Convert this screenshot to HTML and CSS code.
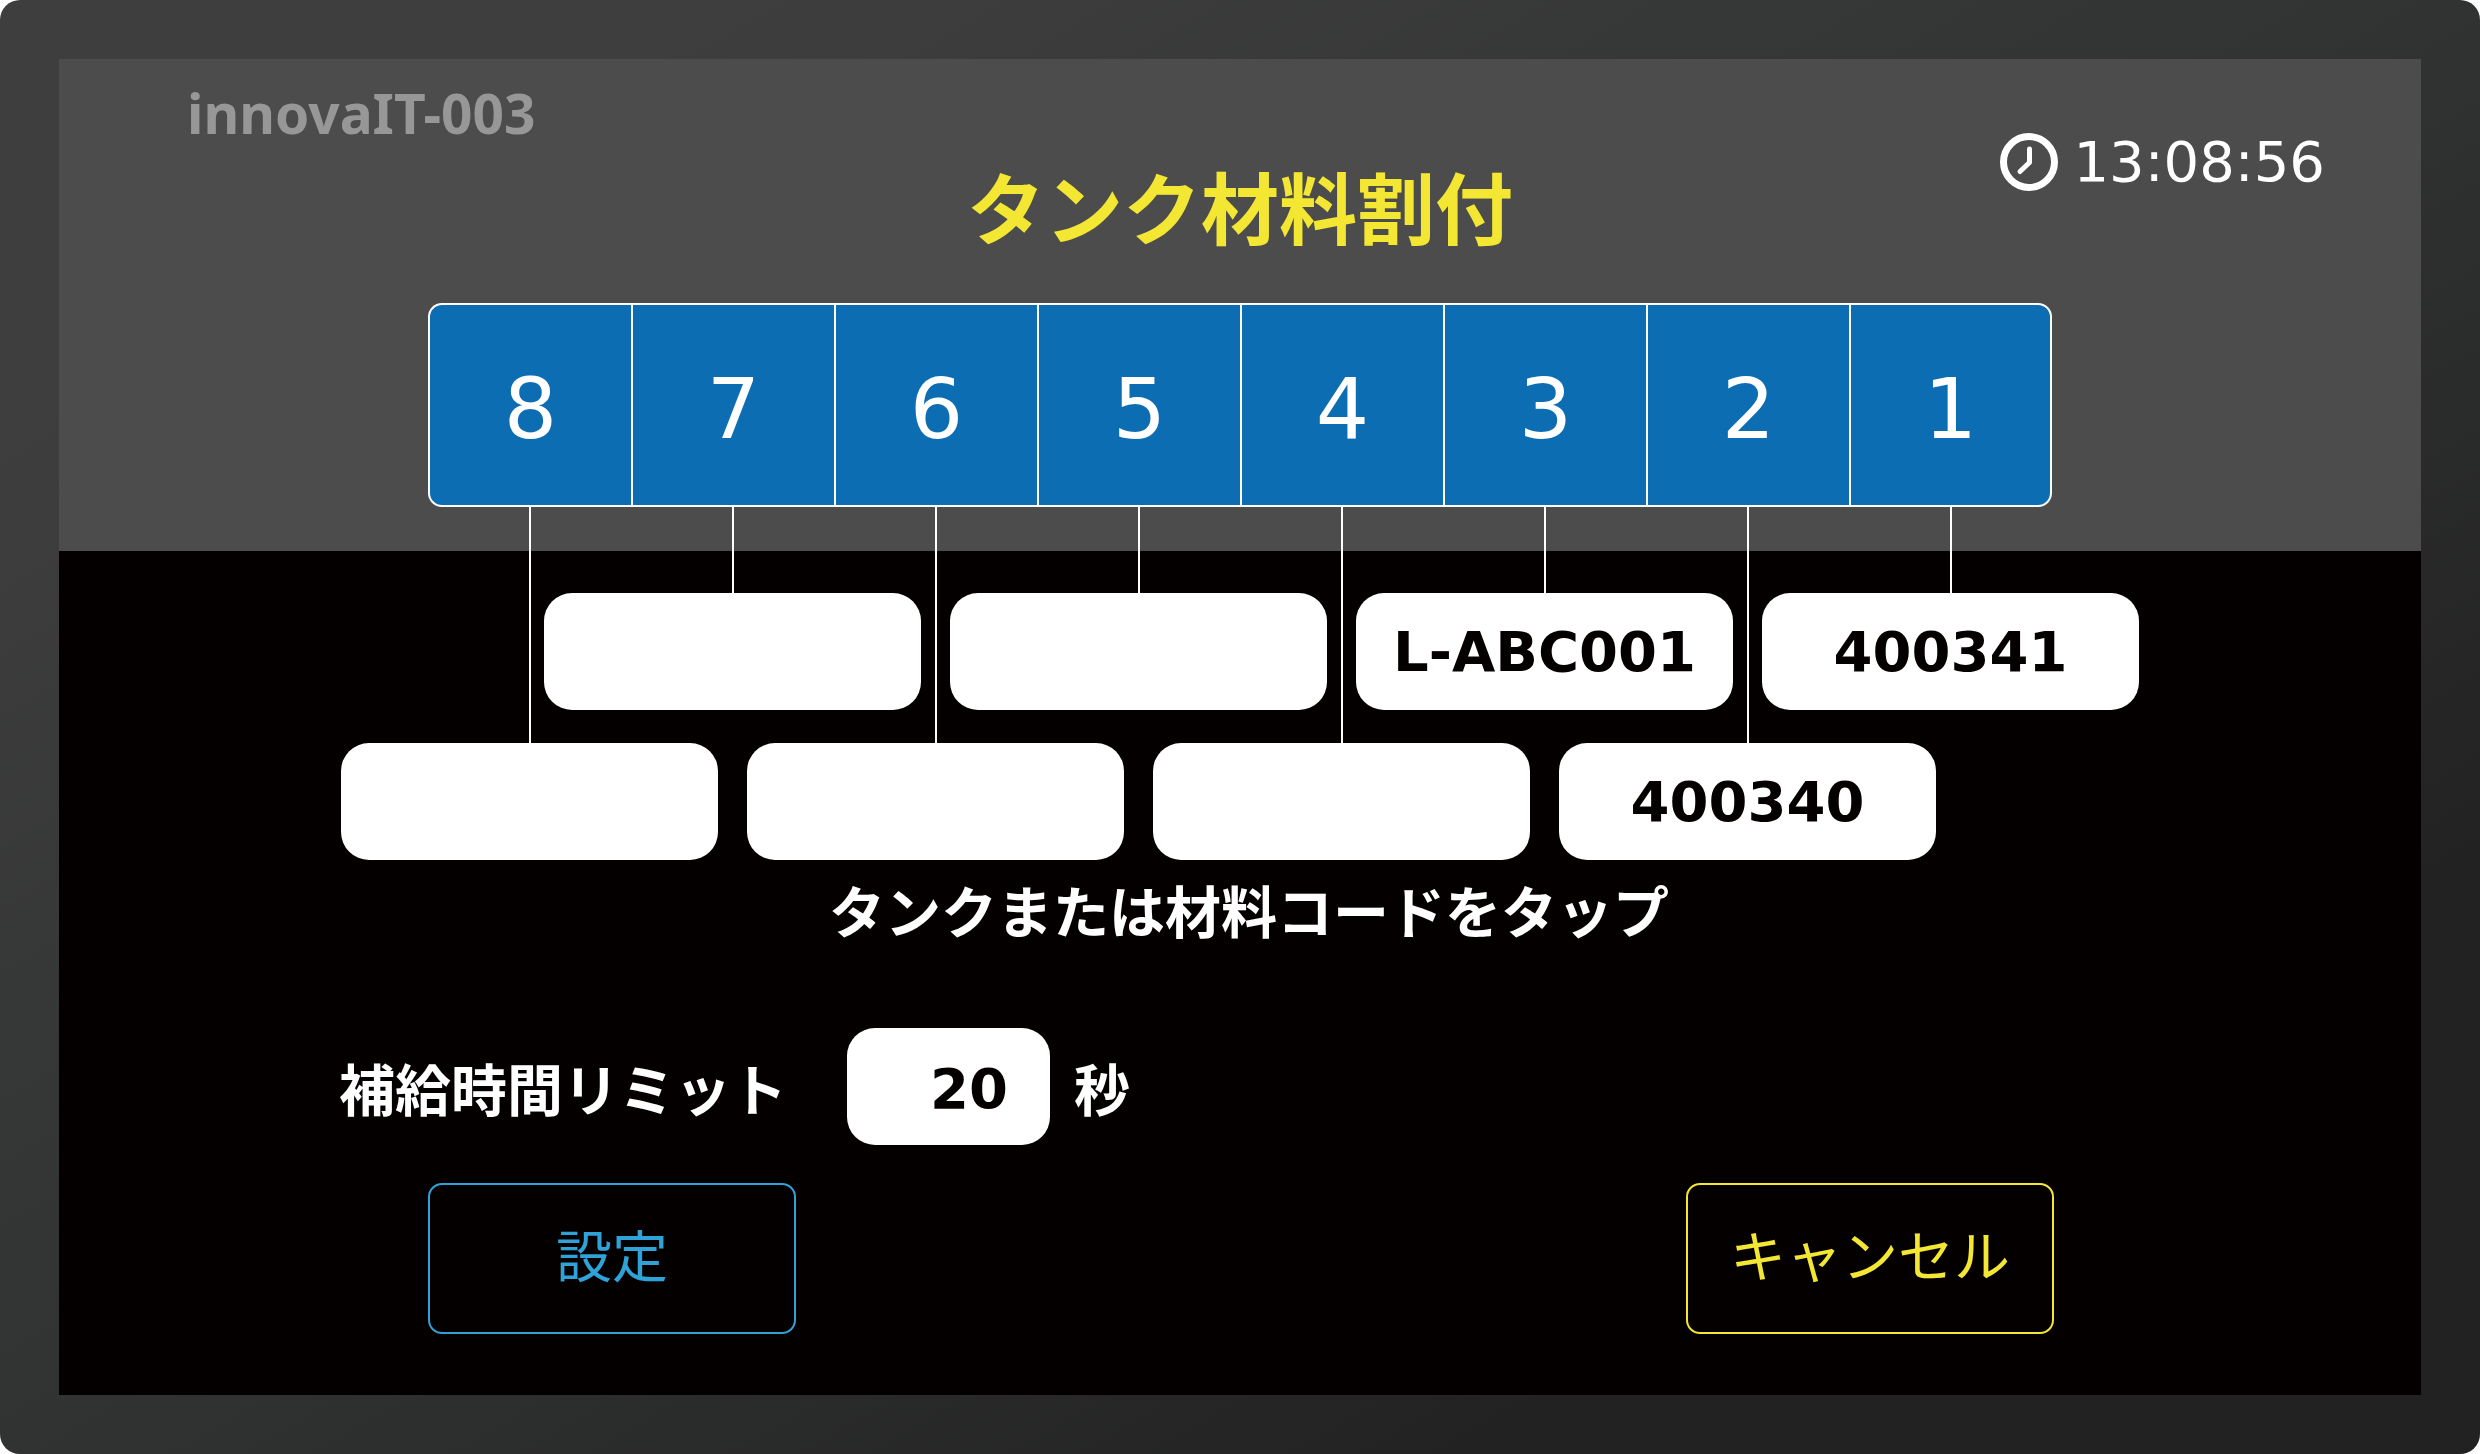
FILE: index.html
```html
<!DOCTYPE html>
<html lang="ja">
<head>
  <meta charset="UTF-8">
  <meta name="viewport" content="width=device-width, initial-scale=1.0">
  <title>タンク材料割付</title>
  <link rel="stylesheet" href="styles.css">
</head>
<body>
  <div class="bezel">
    <main class="screen">
      <header class="topbar">
        <div class="machine">innovaIT-003</div>
        <h1>タンク材料割付</h1>
        <div class="clock">
          <svg viewBox="0 0 58 58" fill="none" stroke="white" stroke-linecap="round" stroke-linejoin="round" aria-hidden="true">
            <circle cx="29" cy="29" r="25.5" stroke-width="7"/>
            <path d="M29.5 16v13.5L20 38.5" stroke-width="5"/>
          </svg>
          <time>13:08:56</time>
        </div>
      </header>

      <section class="tanks">
        <div class="tank low">
          <button type="button" class="number">8</button>
          <span class="line"></span>
          <button type="button" class="code" aria-label="タンク8の材料コード"></button>
        </div>
        <div class="tank">
          <button type="button" class="number">7</button>
          <span class="line"></span>
          <button type="button" class="code" aria-label="タンク7の材料コード"></button>
        </div>
        <div class="tank low">
          <button type="button" class="number">6</button>
          <span class="line"></span>
          <button type="button" class="code" aria-label="タンク6の材料コード"></button>
        </div>
        <div class="tank">
          <button type="button" class="number">5</button>
          <span class="line"></span>
          <button type="button" class="code" aria-label="タンク5の材料コード"></button>
        </div>
        <div class="tank low">
          <button type="button" class="number">4</button>
          <span class="line"></span>
          <button type="button" class="code" aria-label="タンク4の材料コード"></button>
        </div>
        <div class="tank">
          <button type="button" class="number">3</button>
          <span class="line"></span>
          <button type="button" class="code">L-ABC001</button>
        </div>
        <div class="tank low">
          <button type="button" class="number">2</button>
          <span class="line"></span>
          <button type="button" class="code">400340</button>
        </div>
        <div class="tank">
          <button type="button" class="number">1</button>
          <span class="line"></span>
          <button type="button" class="code">400341</button>
        </div>
      </section>

      <p class="hint">タンクまたは材料コードをタップ</p>

      <form class="settings">
        <div class="limit">
          <label for="limit">補給時間リミット</label>
          <input type="text" id="limit" inputmode="numeric" value="20">
          <span>秒</span>
        </div>
        <div class="actions">
          <button type="submit" class="ok">設定</button>
          <button type="button" class="cancel">キャンセル</button>
        </div>
      </form>
    </main>
  </div>
</body>
</html>
```
FILE: styles.css
```css
* {
  box-sizing: border-box;
}

body {
  margin: 0;
  background-color: white;
  color: white;
  font-family: "DejaVu Sans", "Noto Sans CJK JP", sans-serif;
  font-size: 56px;
}

button,
input {
  font: inherit;
  cursor: pointer;
}

.bezel {
  display: flex;
  min-height: 100vh;
  padding: 59px;
  border-radius: 20px;
  background: linear-gradient(to bottom right, #3e3e3e 15%, #313232 50%, #222222 80%);
}

/* grey band behind the title and tanks, black below */
.screen {
  flex: 1;
  background: linear-gradient(#4c4c4c 492px, #040000 0);
}

.topbar {
  display: grid;
  grid-template-columns: 1fr auto 1fr;
  align-items: start;
  padding: 26px 96px 58px;
}

.machine {
  padding-left: 32px;
  color: #979797;
  font-family: "Noto Sans", sans-serif;
  font-size: 55px;
  font-weight: bold;
  line-height: 56px;
}

h1 {
  margin: 80px 0 0;
  color: #f3e733;
  font-family: "Noto Sans CJK JP", sans-serif;
  font-size: 78px;
  line-height: 80px;
}

.clock {
  display: flex;
  justify-self: end;
  align-items: center;
  gap: 15px;
  margin-top: 48px;
  line-height: 58px;
}

.clock svg {
  width: 58px;
  height: 58px;
}

.tanks {
  display: grid;
  grid-template-columns: repeat(8, minmax(0, 1fr));
  padding: 0 369px;
}

.tank {
  display: flex;
  flex-direction: column;
  align-items: center;
}

.number {
  width: 100%;
  height: 204px;
  padding: 8px 0 0;
  border: 2px solid white;
  border-right-width: 0;
  background-color: #0d6db3;
  color: white;
  font-size: 84px;
}

.tank:first-child .number {
  border-radius: 14px 0 0 14px;
}

.tank:last-child .number {
  border-right-width: 2px;
  border-radius: 0 14px 14px 0;
}

.line {
  width: 2px;
  height: 86px;
  background-color: white;
}

.low .line {
  height: 236px;
}

.code {
  flex-shrink: 0;
  width: 186%;
  height: 117px;
  padding: 0;
  border: none;
  border-radius: 28px;
  background-color: white;
  color: #040000;
  font-weight: bold;
}

.hint {
  margin: 14px 0 74px;
  padding-left: 18px;
  font-weight: bold;
  line-height: 80px;
  text-align: center;
}

.limit {
  display: flex;
  align-items: center;
  margin-bottom: 38px;
  padding-left: 280px;
  font-weight: bold;
}

.limit label {
  margin-right: 60px;
}

.limit input {
  width: 203px;
  height: 117px;
  margin-right: 24px;
  padding: 4px 42px 0 0;
  border: none;
  border-radius: 28px;
  color: #040000;
  text-align: right;
}

.actions {
  display: flex;
  justify-content: space-between;
  padding: 0 367px 0 369px;
}

.actions button {
  width: 368px;
  height: 151px;
  padding: 0 0 12px;
  border: 2px solid;
  border-radius: 14px;
  background: none;
}

.actions .ok {
  color: #2fa2d8;
}

.actions .cancel {
  color: #f3e733;
}
```
